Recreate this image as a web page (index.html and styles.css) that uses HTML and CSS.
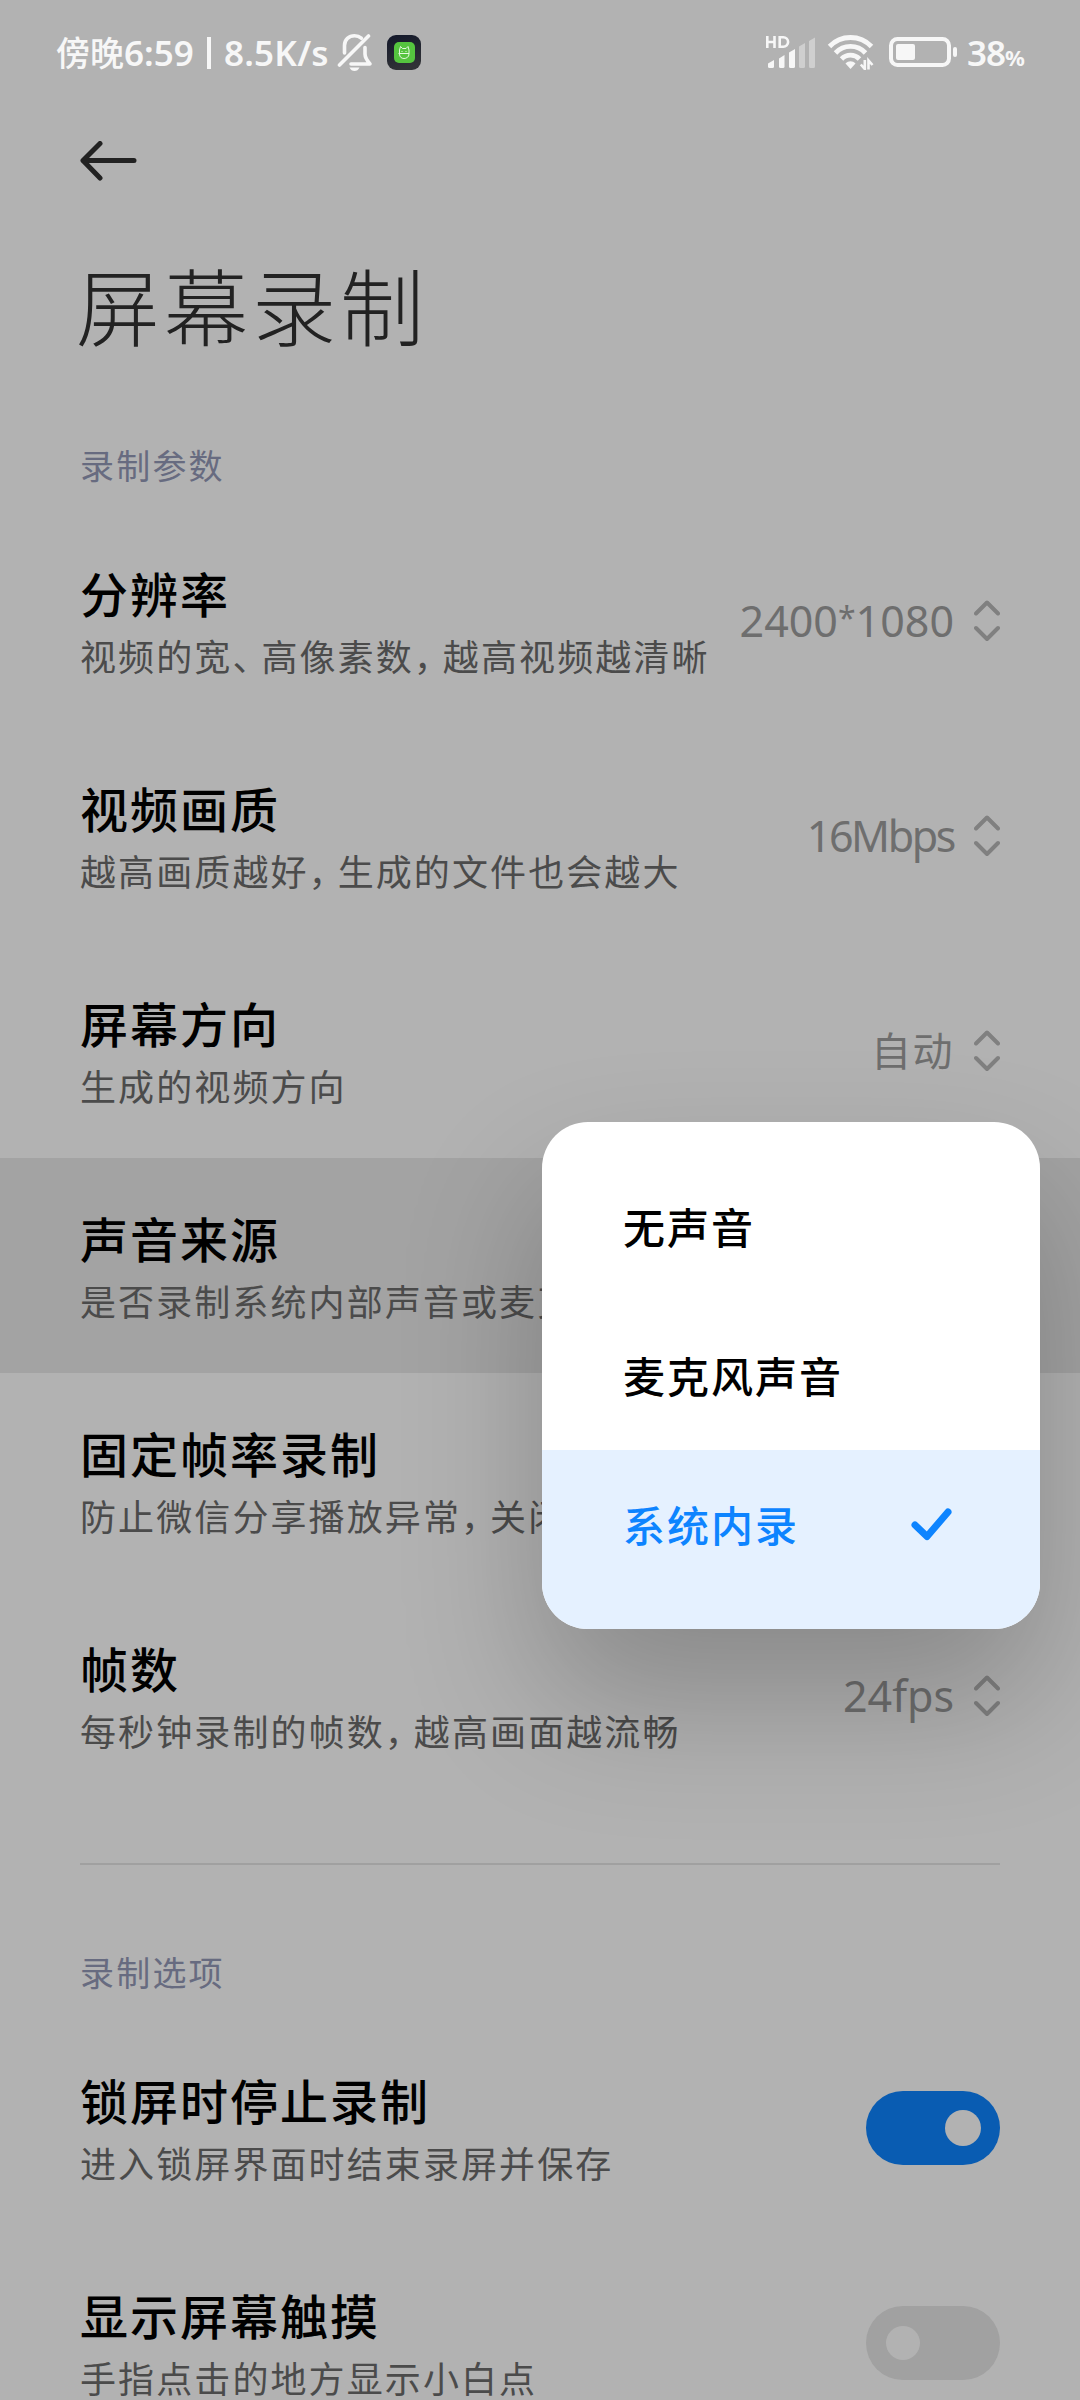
FILE: index.html
```html
<!DOCTYPE html>
<html lang="zh-CN">
<head>
    <meta charset="UTF-8">
    <meta name="viewport" content="width=device-width, initial-scale=1.0">
    <title>屏幕录制</title>
    <link rel="stylesheet" href="styles.css">
</head>
<body>
    <div class="screen">
        <div class="status-bar">
            <div class="status-left">
                <span class="status-time">傍晚<span class="status-num">6:59</span></span>
                <span class="status-sep"></span>
                <span class="status-speed">8.5K/s</span>
                <svg class="bell" width="36" height="40" viewBox="0 0 36 40" fill="none" stroke="#f7f7f7" stroke-width="3.6" stroke-linecap="round" stroke-linejoin="round">
                    <path d="M7.5 21V13.5C7.5 7.5 12 3.8 17.5 3.8c3 0 5 .8 6.800 2.400"/>
                    <path d="M28 15.500v6.500c0 3 2 6.500 5 10H14"/>
                    <path d="M31.500 4 2.500 33"/>
                    <path d="M12.500 35.500h10c-1 2.500-3 3.500-5 3.500s-4-1-5-3.500z" fill="#f7f7f7" stroke="none"/>
                </svg>
                <svg class="app-icon" width="34" height="35" viewBox="0 0 34 35">
                    <defs>
                        <linearGradient id="appBg" x1="0" y1="0" x2="0.300" y2="1">
                            <stop offset="0" stop-color="#12172a"/>
                            <stop offset="1" stop-color="#303236"/>
                        </linearGradient>
                    </defs>
                    <rect width="34" height="35" rx="9" fill="url(#appBg)"/>
                    <rect x="7" y="7" width="21" height="21" rx="5" fill="#55c43f"/>
                    <g fill="none" stroke="#e4f8df" stroke-width="1">
                        <path d="M12.500 18v-3l1-3.500 2 2h3.500l2-2 1 3.500v3M11.500 18.500h11M12.500 19c0 3 2 4.500 4.500 4.500s5-1.500 5-4.500"/>
                        <path d="M14.500 16.500h1M18.500 16.500h1"/>
                    </g>
                </svg>
            </div>
            <div class="status-right">
                <svg class="signal" width="52" height="36" viewBox="0 0 52 36">
                    <g fill="none" stroke="#f7f7f7" stroke-width="2.600">
                        <path d="M2.300 2v12M9.500 2v12M2.300 8h7.200"/>
                        <path d="M14.700 3.200v9.600h3.600a4.800 4.800 0 0 0 0-9.600z"/>
                    </g>
                    <g fill="#f7f7f7">
                        <path d="M3 29.500 9 26v6.500a1.500 1.500 0 0 1-1.500 1.500h-3A1.500 1.500 0 0 1 3 32.500z"/>
                        <path d="M14 24.500 19.500 21v11.500A1.500 1.500 0 0 1 18 34h-2.500a1.500 1.500 0 0 1-1.500-1.500z"/>
                        <path d="M24 18.500 30 15v17.500a1.500 1.500 0 0 1-1.500 1.500h-3a1.500 1.500 0 0 1-1.500-1.500z"/>
                    </g>
                    <g fill="#cfcfcf">
                        <path d="M34 12.500 40 9v23.500a1.500 1.500 0 0 1-1.500 1.500h-3a1.500 1.500 0 0 1-1.500-1.500z"/>
                        <path d="M44 7 50 3.500v29a1.500 1.500 0 0 1-1.500 1.500h-3a1.500 1.500 0 0 1-1.500-1.500z"/>
                    </g>
                </svg>
                <svg class="wifi" width="48" height="36" viewBox="0 0 48 36" fill="none" stroke="#f7f7f7" stroke-width="4.800">
                    <path d="M2.500 12.500a29 29 0 0 1 42 0"/>
                    <path d="M8.500 19a20.500 20.500 0 0 1 30 0"/>
                    <path d="M14.500 25a12.500 12.500 0 0 1 18 0"/>
                    <path d="M18.500 29.500c3-3 7-3 10 0L23.500 35z" fill="#f7f7f7" stroke="none"/>
                    <path d="M37.800 26v9l-4-4.500M41.500 35.500v-9l4 4.500" stroke-width="2.600"/>
                </svg>
                <svg class="battery" width="69" height="30" viewBox="0 0 69 30">
                    <rect x="2" y="2" width="58" height="26" rx="6.500" fill="none" stroke="#f7f7f7" stroke-width="4"/>
                    <rect x="7" y="7" width="19" height="16" rx="2" fill="#f7f7f7"/>
                    <rect x="64" y="10" width="4" height="10" rx="2" fill="#f7f7f7"/>
                </svg>
                <span class="percent">38<small>%</small></span>
            </div>
        </div>

        <div class="header">
            <svg class="back" width="58" height="40" viewBox="0 0 58 40" fill="none" stroke="#222" stroke-width="5" stroke-linecap="round" stroke-linejoin="round">
                <path d="M21 2.500 4 19.500l17 17.500M4 19.500h51"/>
            </svg>
            <h1 class="title">屏幕录制</h1>
        </div>

        <div class="section-label">录制参数</div>
        <div class="row">
            <div class="texts">
                <div class="name">分辨率</div>
                <div class="desc">视频的宽<i>、</i>高像素数<i>，</i>越高视频越清晰</div>
            </div>
            <div class="value">2400<sup>*</sup>1080</div>
            <svg class="arrows" width="26" height="42" viewBox="0 0 26 42"><path d="M2 13.500 13 2.500l11 11M2 28l11 11 11-11"/></svg>
        </div>
        <div class="row">
            <div class="texts">
                <div class="name">视频画质</div>
                <div class="desc">越高画质越好<i>，</i>生成的文件也会越大</div>
            </div>
            <div class="value rate">16Mbps</div>
            <svg class="arrows" width="26" height="42" viewBox="0 0 26 42"><path d="M2 13.500 13 2.500l11 11M2 28l11 11 11-11"/></svg>
        </div>
        <div class="row">
            <div class="texts">
                <div class="name">屏幕方向</div>
                <div class="desc">生成的视频方向</div>
            </div>
            <div class="value direction">自动</div>
            <svg class="arrows" width="26" height="42" viewBox="0 0 26 42"><path d="M2 13.500 13 2.500l11 11M2 28l11 11 11-11"/></svg>
        </div>
        <div class="row active">
            <div class="texts">
                <div class="name">声音来源</div>
                <div class="desc">是否录制系统内部声音或麦克</div>
            </div>
        </div>
        <div class="row">
            <div class="texts">
                <div class="name">固定帧率录制</div>
                <div class="desc">防止微信分享播放异常<i>，</i>关闭</div>
            </div>
        </div>
        <div class="row">
            <div class="texts">
                <div class="name">帧数</div>
                <div class="desc">每秒钟录制的帧数<i>，</i>越高画面越流畅</div>
            </div>
            <div class="value">24fps</div>
            <svg class="arrows" width="26" height="42" viewBox="0 0 26 42"><path d="M2 13.500 13 2.500l11 11M2 28l11 11 11-11"/></svg>
        </div>

        <div class="divider"></div>

        <div class="section-label">录制选项</div>
        <div class="row">
            <div class="texts">
                <div class="name">锁屏时停止录制</div>
                <div class="desc">进入锁屏界面时结束录屏并保存</div>
            </div>
            <div class="switch on"><span class="knob"></span></div>
        </div>
        <div class="row">
            <div class="texts">
                <div class="name">显示屏幕触摸</div>
                <div class="desc">手指点击的地方显示小白点</div>
            </div>
            <div class="switch"><span class="knob"></span></div>
        </div>

        <!-- Sound source menu -->
        <div class="popup">
            <div class="option">无声音</div>
            <div class="option">麦克风声音</div>
            <div class="option selected">
                系统内录
                <svg width="42" height="36" viewBox="0 0 42 36" fill="none" stroke="#0d84ff" stroke-width="7" stroke-linecap="round" stroke-linejoin="round">
                    <path d="M4 20l12 11.500L37 7"/>
                </svg>
            </div>
        </div>
    </div>
</body>
</html>
```
FILE: styles.css
```css
* {
    box-sizing: border-box;
}

body {
    margin: 0;
    background-color: #b2b2b2;
    font-family: "Noto Sans CJK SC", sans-serif;
}

.screen {
    position: relative;
    width: 1080px;
    height: 2400px;
    overflow: hidden;
}

/* Status bar */
.status-bar {
    display: flex;
    justify-content: space-between;
    height: 104px;
    padding: 0 53px 0 56px;
    color: #f7f7f7;
}

.status-left,
.status-right {
    display: flex;
    align-items: center;
    height: 104px;
}

.status-time {
    width: 151px;
    font-size: 34px;
    font-weight: 500;
    line-height: 48px;
    white-space: nowrap;
}

.status-num,
.status-speed,
.percent {
    font-family: "Noto Sans", sans-serif;
    font-size: 35px;
    font-weight: 600;
}

.status-sep {
    width: 4px;
    height: 32px;
    margin-right: 13px;
    margin-top: 2px;
    background-color: #f7f7f7;
}

.status-speed {
    width: 113px;
    letter-spacing: 0.2px;
}

.bell {
    margin-right: 14px;
}

.signal {
    margin-right: 10px;
}

.wifi {
    margin-right: 14px;
}

.battery {
    margin-right: 9px;
}

.percent {
    width: 60px;
    letter-spacing: -1px;
    white-space: nowrap;
}

.percent small {
    font-size: 22px;
    font-weight: 700;
}

/* Header */
.header {
    height: 313px;
    padding: 37px 76px 0;
}

.back {
    display: block;
    margin-left: 3px;
}

.title {
    margin: 58px 0 0;
    font-size: 84px;
    font-weight: 300;
    line-height: 130px;
    letter-spacing: 4px;
    color: #222;
}

.section-label {
    height: 96px;
    padding: 24px 80px 0;
    font-size: 34px;
    line-height: 48px;
    letter-spacing: 2.2px;
    color: #676b80;
}

/* Setting rows */
.row {
    display: flex;
    align-items: center;
    height: 215px;
    padding: 0 80px;
}

.row.active {
    background-color: #a3a3a3;
}

.texts {
    flex: 1;
    padding-bottom: 1px;
    white-space: nowrap;
}

.name {
    font-size: 48px;
    font-weight: 500;
    line-height: 70px;
    letter-spacing: 2px;
    color: #000;
}

.desc {
    font-size: 36px;
    line-height: 56px;
    letter-spacing: 2.1px;
    color: #4b4b4b;
}

.desc i {
    font-style: normal;
    letter-spacing: -7px;
}

.value {
    font-family: "Noto Sans", "Noto Sans CJK SC", sans-serif;
    font-size: 43px;
    line-height: 60px;
    letter-spacing: 0;
    color: #6e6e6e;
}

.value.rate {
    letter-spacing: -2.4px;
}

.value.direction {
    font-size: 40px;
    letter-spacing: 1.5px;
}

.value sup {
    font-size: 32px;
    line-height: 0;
    vertical-align: 7px;
}

.arrows {
    margin-left: 20px;
    fill: none;
    stroke: #808080;
    stroke-width: 4;
    stroke-linecap: round;
    stroke-linejoin: round;
}

.divider {
    height: 2px;
    margin: 60px 80px 59px;
    background-color: #a0a0a0;
}

/* Switch */
.switch {
    display: flex;
    align-items: center;
    width: 134px;
    height: 74px;
    padding: 0 20px;
    border-radius: 37px;
    background-color: #a1a1a1;
}

.switch .knob {
    width: 34px;
    height: 34px;
    border-radius: 50%;
    background-color: #b2b2b2;
}

.switch.on {
    justify-content: flex-end;
    padding-right: 19px;
    background-color: #095cb2;
}

.switch.on .knob {
    width: 36px;
    height: 36px;
}

/* Popup menu */
.popup {
    position: absolute;
    top: 1122px;
    left: 542px;
    width: 498px;
    padding-top: 29px;
    border-radius: 46px;
    background-color: #fff;
    overflow: hidden;
    box-shadow: 0 70px 140px rgba(0, 0, 0, 0.23);
}

.option {
    display: flex;
    align-items: center;
    justify-content: space-between;
    height: 149px;
    padding: 0 87px 0 81px;
    font-size: 42px;
    font-weight: 500;
    letter-spacing: 2px;
    color: #000;
}

.option.selected {
    height: 179px;
    margin-top: 1px;
    padding-bottom: 33px;
    background-color: #e5f1ff;
    color: #0d84ff;
}
```
